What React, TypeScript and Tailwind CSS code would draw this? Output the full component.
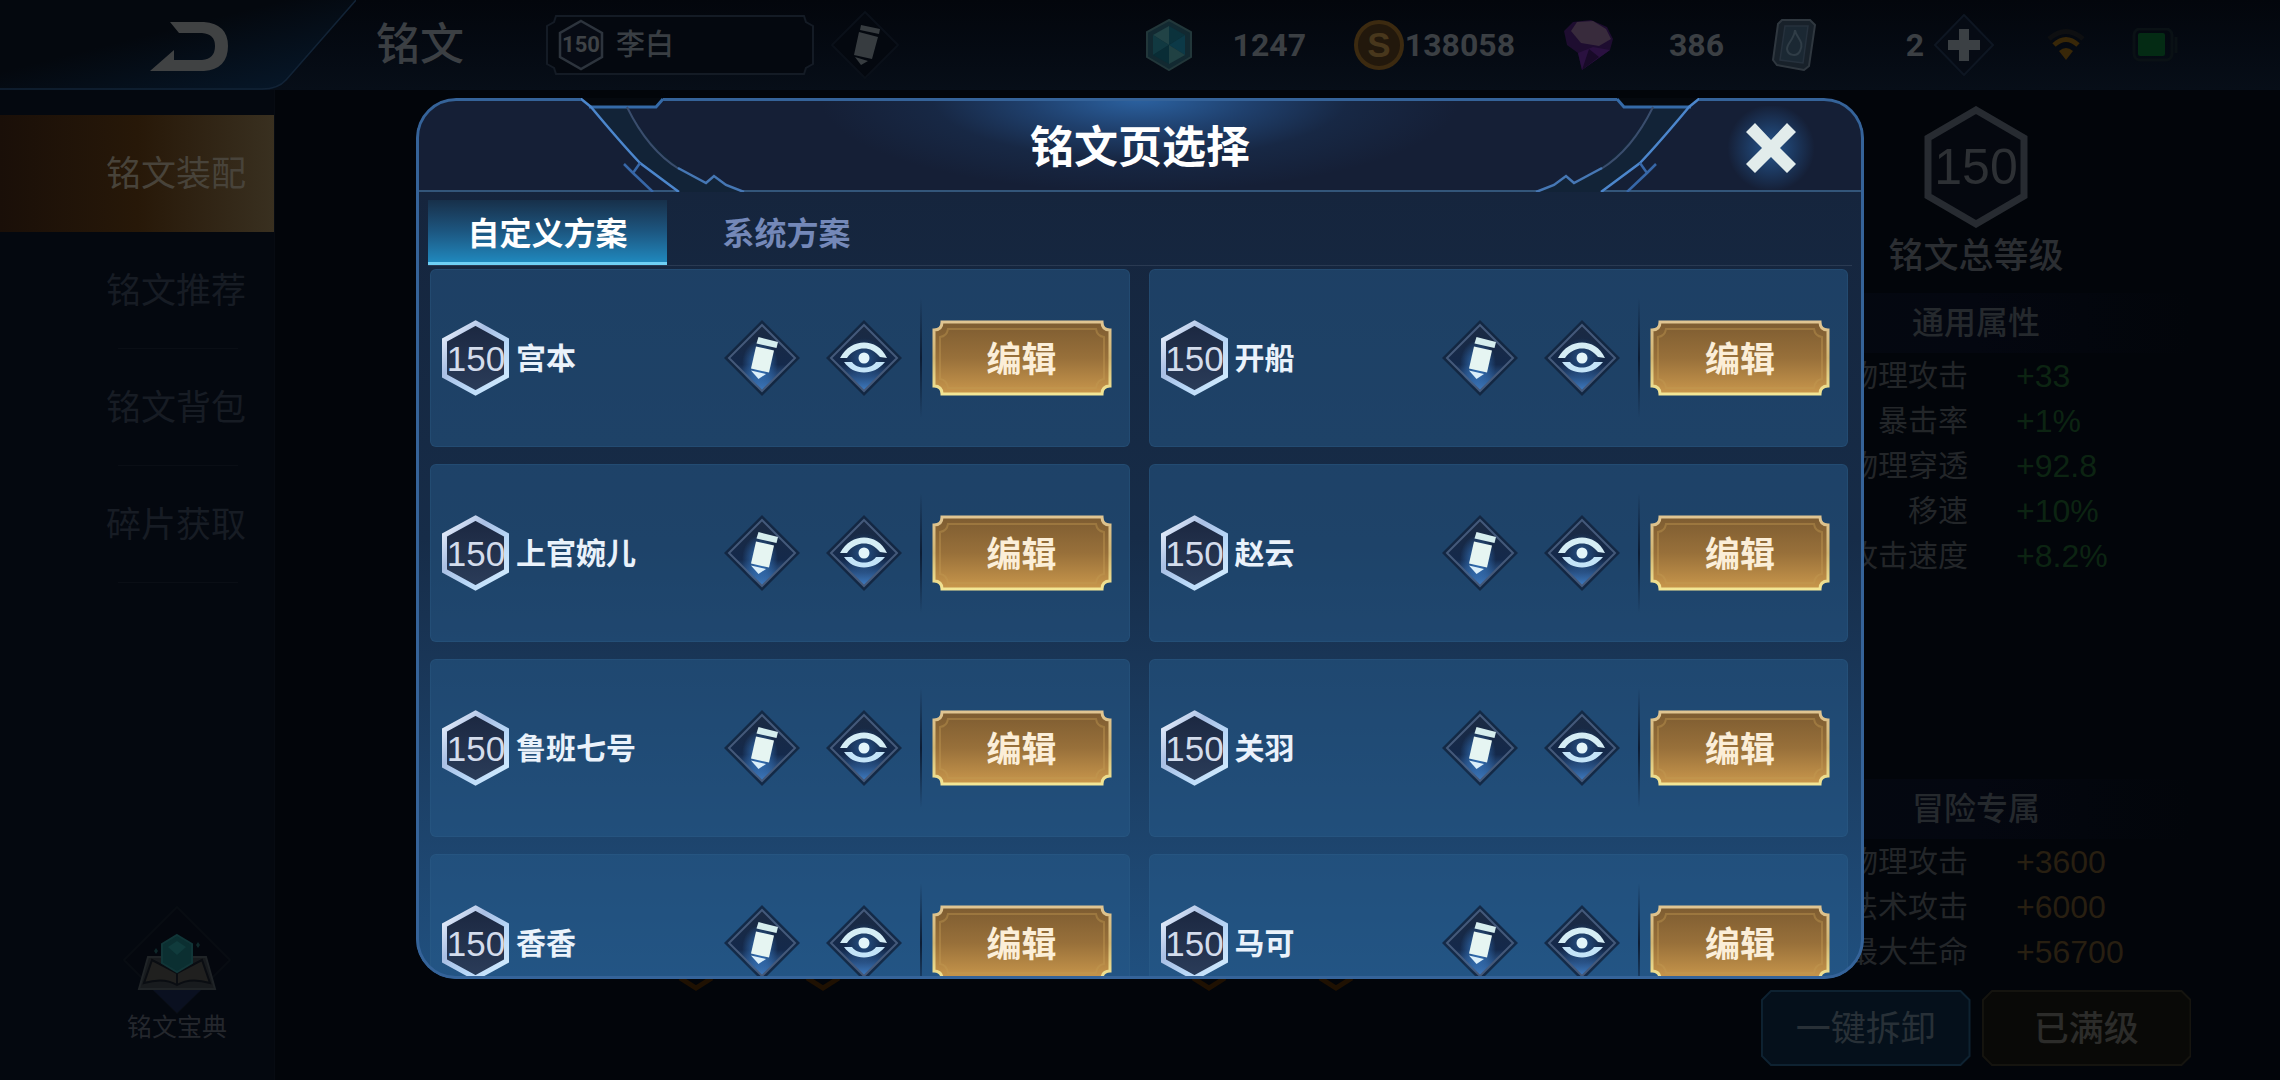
import React, { useState } from 'react';

const pages = ['宫本', '开船', '上官婉儿', '赵云', '鲁班七号', '关羽', '香香', '马可'];

const navItems = ['铭文装配', '铭文推荐', '铭文背包', '碎片获取'];

const commonStats = [
  { label: '物理攻击', value: '+33' },
  { label: '暴击率', value: '+1%' },
  { label: '物理穿透', value: '+92.8' },
  { label: '移速', value: '+10%' },
  { label: '攻击速度', value: '+8.2%' },
];

const adventureStats = [
  { label: '物理攻击', value: '+3600' },
  { label: '法术攻击', value: '+6000' },
  { label: '最大生命', value: '+56700' },
];

// Gradients shared by all icons
const SharedDefs = () => (
  <svg className="absolute h-0 w-0" aria-hidden="true">
    <defs>
      <linearGradient id="hexStroke" x1="0" y1="0" x2="1" y2="1">
        <stop offset="0" stopColor="#f4f8ff" />
        <stop offset="0.35" stopColor="#a9bfe4" />
        <stop offset="0.65" stopColor="#b9d8f8" />
        <stop offset="1" stopColor="#d6efff" />
      </linearGradient>
      <linearGradient id="hexFill" x1="0" y1="0" x2="0" y2="1">
        <stop offset="0" stopColor="#1b2740" />
        <stop offset="1" stopColor="#2b3d5a" />
      </linearGradient>
      <linearGradient id="diamondFill" x1="0" y1="0" x2="0" y2="1">
        <stop offset="0" stopColor="#1b2a42" />
        <stop offset="0.6" stopColor="#14294b" />
        <stop offset="1" stopColor="#3f7dc4" />
      </linearGradient>
      <linearGradient id="goldFill" x1="0" y1="0" x2="0" y2="1">
        <stop offset="0" stopColor="#7d5c31" />
        <stop offset="0.5" stopColor="#98703a" />
        <stop offset="1" stopColor="#c9974c" />
      </linearGradient>
      <linearGradient id="goldStroke" x1="0" y1="0" x2="0" y2="1">
        <stop offset="0" stopColor="#e0c592" />
        <stop offset="0.5" stopColor="#d2b672" />
        <stop offset="1" stopColor="#f3e695" />
      </linearGradient>
      <radialGradient id="iconGlow">
        <stop offset="0" stopColor="#3d8be0" stopOpacity="0.8" />
        <stop offset="1" stopColor="#3d8be0" stopOpacity="0" />
      </radialGradient>
    </defs>
  </svg>
);

const LevelHex = () => (
  <span className="grid h-[76px] w-[68px] shrink-0 place-items-center">
    <svg viewBox="0 0 68 76" className="col-start-1 row-start-1 h-[76px] w-[68px]">
      <path d="M33.500 3 L64.500 20 V56 L33.500 73 L2.500 56 V20 Z" fill="url(#hexFill)" stroke="url(#hexStroke)" strokeWidth="5" />
    </svg>
    <span className="col-start-1 row-start-1 text-[35px] leading-none text-[#d3dcec]">150</span>
  </span>
);

const DiamondBase = () => (
  <>
    <path d="M38 0 L76 38 L38 76 L0 38 Z" fill="#10203a" opacity="0.8" />
    <path d="M38 5 L71 38 L38 71 L5 38 Z" fill="url(#diamondFill)" stroke="#44597a" strokeWidth="2" />
  </>
);

const PencilIcon = () => (
  <svg viewBox="0 0 76 76" className="h-[76px] w-[76px]">
    <DiamondBase />
    <ellipse cx="36" cy="44" rx="18" ry="24" fill="url(#iconGlow)" />
    <path d="M34.500 17 L54 22 L52.500 28 L32.500 23.500 Z" fill="#d5edee" />
    <path d="M32 26.500 L50 30.500 L45 52.500 L27 48.500 Z" fill="#e6f5f2" />
    <path d="M27 50.500 L42 54 L34.500 59 Z" fill="#dbeffa" />
  </svg>
);

const EyeIcon = () => (
  <svg viewBox="0 0 76 76" className="h-[76px] w-[76px]">
    <DiamondBase />
    <circle cx="38" cy="38" r="20" fill="url(#iconGlow)" opacity="0.5" />
    <path d="M14 38 C20 27 29 22.500 38 22.500 C47 22.500 56 27 61 38 L54 37 C49 31 44 28.500 38 28.500 C32 28.500 26 31 21 38 Z" fill="#d5edf5" />
    <path d="M18 42 L26 42 C29 46 33 47.500 38 47.500 C43 47.500 47 46 50 42 L59 42 C53 49 46 52.500 38 52.500 C30 52.500 23 49 18 42 Z" fill="#c4e4f8" />
    <circle cx="38" cy="38" r="5.500" fill="#e3f5fa" />
  </svg>
);

const GoldFrame = () => (
  <svg viewBox="0 0 180 76" preserveAspectRatio="none" className="absolute inset-0 h-full w-full">
    <path
      d="M10 2 H170 Q170 10 178 10 V66 Q170 66 170 74 H10 Q10 66 2 66 V10 Q10 10 10 2 Z"
      fill="url(#goldFill)"
      stroke="url(#goldStroke)"
      strokeWidth="3"
    />
    <path
      d="M16 9 H164 Q165 16 172 17 V59 Q165 60 164 68 H16 Q15 60 8 59 V17 Q15 16 16 9 Z"
      fill="none"
      stroke="#c39a52"
      strokeOpacity="0.4"
      strokeWidth="2"
    />
  </svg>
);

const PageCard: React.FC<{ name: string }> = ({ name }) => (
  <li className="flex h-[178px] items-center rounded-md border border-[#31628c]/30 bg-[#265a8a]/50 pl-[11px] pr-[17px]">
    <LevelHex />
    <span className="ml-1.5 flex-1 whitespace-nowrap pt-0.5 text-[30px] font-bold leading-none text-[#eaf2fb]">{name}</span>
    <button aria-label={`重命名 ${name}`} className="mr-[26px] shrink-0">
      <PencilIcon />
    </button>
    <button aria-label={`预览 ${name}`} className="shrink-0">
      <EyeIcon />
    </button>
    <div className="ml-[18px] mr-[10px] h-[120px] w-0.5 shrink-0 bg-linear-to-b from-transparent via-[#0c1c33] to-transparent" />
    <button className="relative h-[76px] w-[180px] shrink-0 pt-1">
      <GoldFrame />
      <span className="relative text-[35px] font-bold leading-none text-[#fbeed8]">编辑</span>
    </button>
  </li>
);

// Corner strokes of the dialog header; the right one is mirrored
const HeaderCorner: React.FC<{ className?: string }> = ({ className }) => (
  <svg viewBox="0 0 344 94" fill="none" className={`pointer-events-none absolute top-0 h-[94px] w-[344px] ${className}`}>
    <path d="M175 9 L197 37 Q208 52 224 65 L263 94 H328 L310 87 L298 78 L290 85 Q240 60 211 9 Z" fill="#122337" />
    <path d="M163 -1 L174 9 H240 L249 -1 Z" fill="#05090f" />
    <path d="M173 9 H240 L247 1" stroke="#356aa8" strokeWidth="3" />
    <path d="M164 0 L175 9 Q205 45 224 65 L263 94" stroke="#4c86cc" strokeWidth="2.500" />
    <path d="M224 65 L217 75 M208 66 L217 75 L237 94" stroke="#3767a8" strokeWidth="2.500" />
    <path d="M211 9 Q232 52 263 71" stroke="#3a4d6d" strokeWidth="2" />
    <path d="M262 70 L290 85 L298 78 L310 87 L328 94" stroke="#4677b4" strokeWidth="2.500" />
  </svg>
);

const SelectDialog = () => {
  const [tab, setTab] = useState(0);
  const tabs = ['自定义方案', '系统方案'];

  return (
    <div className="absolute inset-0 px-[416px] pb-[101px] pt-[98px]">
      <section
        role="dialog"
        aria-label="铭文页选择"
        className="relative flex h-full flex-col overflow-hidden rounded-[40px] bg-linear-to-b from-[#15233a] via-[#162c48] to-[#20507f]"
      >
        {/* Title bar */}
        <header className="relative grid h-[94px] shrink-0 grid-cols-[1fr_auto_1fr] items-center border-b-2 border-[#33567a] bg-[#151f36] bg-[radial-gradient(ellipse_320px_94px_at_50%_0%,rgba(46,106,174,0.9)_0%,rgba(38,86,146,0.6)_35%,rgba(30,66,112,0.25)_65%,transparent_100%)] pt-2">
          <HeaderCorner className="left-0" />
          <HeaderCorner className="right-0 -scale-x-100" />
          <h2 className="col-start-2 text-[44px] font-bold leading-none text-white">铭文页选择</h2>
          <button
            aria-label="关闭"
            className="relative mr-[47px] flex h-[84px] w-[92px] items-center justify-center justify-self-end bg-[radial-gradient(circle,#28568c_0%,rgba(32,70,118,0.7)_35%,transparent_70%)]"
          >
            <svg viewBox="0 0 52 52" className="h-[52px] w-[52px]">
              <path d="M10 1 L26 18 L42 1 L51 10 L35 26 L51 42 L42 51 L26 35 L10 51 L1 42 L17 26 L1 10 Z" fill="#e2eceb" />
            </svg>
          </button>
        </header>

        {/* Tabs */}
        <div role="tablist" className="mx-3 mt-2 flex h-[66px] shrink-0 border-b border-[#2a3a52]">
          {tabs.map((label, i) => (
            <button
              key={label}
              role="tab"
              aria-selected={tab === i}
              onClick={() => setTab(i)}
              className={`w-[239px] border-b-3 pt-1.5 text-[32px] font-bold leading-none ${
                tab === i
                  ? 'border-[#6fd0f5] bg-linear-to-b from-[#17304a] via-[#1c5680] to-[#1f88bd] text-white'
                  : 'border-transparent text-[#7488b8]'
              }`}
            >
              {label}
            </button>
          ))}
        </div>

        {/* Page list */}
        <div className="mb-[3px] min-h-0 flex-1 overflow-hidden pl-3.5 pr-4 pt-[3px]">
          <ul className="grid grid-cols-2 gap-x-[19px] gap-y-[17px]">
            {pages.map((name) => (
              <PageCard key={name} name={name} />
            ))}
          </ul>
        </div>
      </section>
      {/* Outline, left open over the two notches of the title bar */}
      <div className="pointer-events-none absolute inset-x-[416px] bottom-[101px] top-[98px] rounded-[40px] border-3 border-[#356399] [mask-image:linear-gradient(to_right,#000_165px,transparent_165px,transparent_247px,#000_247px,#000_calc(100%-247px),transparent_calc(100%-247px),transparent_calc(100%-165px),#000_calc(100%-165px)),linear-gradient(to_bottom,transparent_30px,#000_30px)]" />
    </div>
  );
};

const Resource: React.FC<{ value: string; children: React.ReactNode }> = ({ value, children }) => (
  <div className="flex w-[161px] items-center justify-between">
    {children}
    <span className="font-[Roboto] text-[32px] font-bold leading-none text-[#3b3f43]">{value}</span>
  </div>
);

const TopBar = () => (
  <header className="flex h-[90px] shrink-0 items-center bg-linear-to-b from-[#03060c] to-[#070e18]">
    <button aria-label="返回" className="h-[90px] w-[356px] shrink-0">
      <svg viewBox="0 0 356 90" className="h-[90px] w-[356px]">
        <defs>
          <linearGradient id="backFill" x1="0" y1="0" x2="1" y2="1">
            <stop offset="0.4" stopColor="#04080e" />
            <stop offset="1" stopColor="#071a2e" />
          </linearGradient>
        </defs>
        <path d="M0 0 H356 L286 80 Q278 90 262 90 H0 Z" fill="url(#backFill)" />
        <path d="M356 0 L286 80 Q278 89 262 89 H0" fill="none" stroke="#122336" strokeWidth="1.500" />
        <path d="M170 22 H204 Q228 24 228 46 Q228 69 204 71 H150 L174 50 V60 H202 Q215 59 215 46 Q215 34 202 33 H179 Z" fill="#404243" />
      </svg>
    </button>
    <h1 className="ml-5 w-[170px] whitespace-nowrap text-[44px] font-medium leading-none text-[#3b3f43]">铭文</h1>
    <button className="relative flex h-[60px] w-[268px] shrink-0 items-center pl-3">
      <svg viewBox="0 0 268 60" className="absolute inset-0 h-full w-full" fill="none">
        <path d="M10 1 H258 L260 7 L267 11 V49 L260 53 L258 59 H10 L8 53 L1 49 V11 L8 7 Z" fill="#04080f" stroke="#141b25" strokeWidth="2" />
      </svg>
      <span className="relative grid place-items-center">
        <svg viewBox="0 0 46 52" className="col-start-1 row-start-1 h-[52px] w-[46px]">
          <path d="M23 2 L44 14 V38 L23 50 L2 38 V14 Z" fill="#070b14" stroke="#2d343d" strokeWidth="2.500" />
        </svg>
        <span className="col-start-1 row-start-1 font-[Roboto] text-[22px] font-bold leading-none text-[#3e4246]">150</span>
      </span>
      <span className="relative ml-3 text-[29px] font-medium leading-none text-[#393e43]">李白</span>
    </button>
    <button aria-label="重命名" className="ml-4 shrink-0">
      <svg viewBox="0 0 70 70" className="h-[70px] w-[70px]">
        <path d="M35 2 L68 35 L35 68 L2 35 Z" fill="#04080f" stroke="#0a1019" strokeWidth="2" />
        <path d="M31 15 L50 19 L49 24 L30 20 Z M29 22 L48 27 L42 49 L24 45 Z M25 47 L38 51 L31 55 Z" fill="#373c40" />
      </svg>
    </button>

    {/* Currencies */}
    <div className="ml-auto mr-[100px] flex items-center gap-12">
      <Resource value="1247">
        <svg viewBox="0 0 50 52" className="h-[52px] w-[50px]">
          <path d="M24 1 L46 13 V38 L24 51 L2 38 V13 Z" fill="#122931" stroke="#22373a" strokeWidth="2" />
          <path d="M24 7 L40 16 L24 26 Z" fill="#0b323c" />
          <path d="M24 7 L8 16 L24 26 Z" fill="#214346" />
          <path d="M40 16 V36 L24 26 Z" fill="#0c3947" />
          <path d="M8 16 V36 L24 26 Z" fill="#113941" />
          <path d="M8 36 L24 45 L24 26 Z" fill="#092d36" />
          <path d="M40 36 L24 45 L24 26 Z" fill="#204143" />
        </svg>
      </Resource>
      <Resource value="138058">
        <svg viewBox="0 0 50 52" className="h-[52px] w-[50px]">
          <circle cx="25" cy="26" r="23" fill="#22180c" stroke="#3c2a10" strokeWidth="4" />
          <text x="25" y="38" textAnchor="middle" fontSize="35" fontWeight="bold" fontFamily="Liberation Sans" fill="#48371c">S</text>
        </svg>
      </Resource>
      <Resource value="386">
        <svg viewBox="0 0 50 52" className="h-[52px] w-[50px]">
          <path d="M1 12 L10 3 L28 1 L44 8 L50 20 L47 31 L19 51 L15 34 L4 26 Z" fill="#1e0d30" />
          <path d="M8 12 L14 3 L30 2 L43 10 L48 20 L36 27 L18 24 Z" fill="#382b3c" />
          <path d="M15 34 L30 28 L47 31 L19 51 Z" fill="#2a1140" />
          <path d="M19 51 L26 30 L36 38 Z" fill="#180a28" />
        </svg>
      </Resource>
      <div className="flex items-center gap-2.5">
        <div className="flex w-[152px] items-center justify-between">
          <svg viewBox="0 0 44 52" className="h-[52px] w-[44px]">
            <path d="M10 1 H38 L43 6 L37 47 L32 51 L5 46 L1 41 L6 5 Z" fill="#18212a" stroke="#2f373f" strokeWidth="2" />
            <path d="M13 7 H36 L31 44 L8 41 Z" fill="#1b2833" stroke="#26313d" strokeWidth="1.500" />
            <path d="M23 11 C24 19 33 22 28 32 C25 38 16 37 15 30 C15 24 22 21 23 11 Z" fill="none" stroke="#303d47" strokeWidth="2" />
          </svg>
          <span className="font-[Roboto] text-[32px] font-bold leading-none text-[#3b3f43]">2</span>
        </div>
        <button aria-label="添加">
          <svg viewBox="0 0 60 62" className="h-[62px] w-[60px]">
            <path d="M30 1 L59 31 L30 61 L1 31 Z" fill="#060b14" stroke="#0e1622" strokeWidth="2" />
            <path d="M25 15 H35 V26 H46 V36 H35 V47 H25 V36 H14 V26 H25 Z" fill="#3b4044" />
          </svg>
        </button>
      </div>
      <div className="flex items-center gap-[42px]">
        <svg viewBox="0 0 48 34" className="h-[34px] w-[48px]" fill="none">
          <path d="M7 11 Q24 -4 41 11" stroke="#0e0f11" strokeWidth="5" />
          <path d="M12 17 Q24 6 36 17" stroke="#382708" strokeWidth="5" />
          <path d="M17 23 Q24 17 31 23 L24 32 Z" fill="#382708" />
        </svg>
        <svg viewBox="0 0 48 34" className="h-[34px] w-[48px]">
          <rect x="2" y="1" width="38" height="31" rx="6" fill="none" stroke="#0a1115" strokeWidth="3" />
          <rect x="6" y="5" width="27" height="23" rx="2" fill="#042b14" />
          <path d="M44 9 V25" stroke="#0a1115" strokeWidth="3" />
        </svg>
      </div>
    </div>
  </header>
);

const SideNav = () => (
  <aside className="flex w-[275px] shrink-0 flex-col border-r border-[#070b12] bg-[#04080f] pb-10 pt-[25px]">
    <nav>
      {navItems.map((label, i) => (
        <a
          key={label}
          href="#"
          className={`flex h-[117px] flex-col items-end justify-between pr-7 text-[35px] leading-none ${
            i === 0
              ? 'bg-linear-to-r from-[#1a0f08] via-[#271808] to-[#393020] text-[#48433a]'
              : 'text-[#171c24]'
          }`}
        >
          <span />
          <span>{label}</span>
          <span className={`mr-2 h-px w-[120px] ${i === 0 ? '' : 'bg-[#0a0e15]'}`} />
        </a>
      ))}
    </nav>
    <a href="#" className="ml-[122px] mt-auto flex w-[110px] flex-col items-center text-[25px] leading-none text-[#24272d]">
      <svg viewBox="0 0 110 110" className="h-[110px] w-[110px]">
        <path d="M55 2 L108 55 L55 108 L2 55 Z" fill="#04070e" stroke="#080c12" strokeWidth="2" />
        <path d="M30 84 H80 L55 108 Z" fill="#0a1020" />
        <path d="M26 52 H84 L93 84 H17 Z" fill="#181b1e" stroke="#202427" strokeWidth="2" />
        <path d="M30 55 L22 78 Q42 72 55 80 Q68 72 88 78 L80 55 L55 68 Z" fill="#20201f" stroke="#0a0d12" strokeWidth="2" />
        <path d="M55 68 V80" stroke="#0a0d12" strokeWidth="2" />
        <path d="M55 30 L70 39 V58 L55 67 L40 58 V39 Z" fill="#0b2f31" stroke="#113638" strokeWidth="2" />
        <path d="M55 36 L64 42 L55 50 L46 42 Z" fill="#103b3c" />
        <path d="M34 43 L36 46 L34 49 L32 46 Z M76 37 L78 40 L76 43 L74 40 Z" fill="#0f282a" />
      </svg>
      <span>铭文宝典</span>
    </a>
  </aside>
);

const StatBlock: React.FC<{ title: string; stats: { label: string; value: string }[]; valueClass: string }> = ({
  title,
  stats,
  valueClass,
}) => (
  <div>
    <h3 className="flex h-[60px] items-center justify-center bg-linear-to-r from-[#040810] via-[#040710] to-transparent text-[32px] font-medium leading-none text-[#25292d]">
      {title}
    </h3>
    <dl>
      {stats.map(({ label, value }) => (
        <div key={label} className="grid h-[45px] grid-cols-[207px_1fr] items-center gap-12 leading-none">
          <dt className="text-right text-[30px] text-[#232629]">{label}</dt>
          <dd className={`text-[32px] ${valueClass}`}>{value}</dd>
        </div>
      ))}
    </dl>
  </div>
);

const StatsPanel = () => (
  <aside className="mr-[89px] flex w-[430px] shrink-0 flex-col pb-3.5 pt-4">
    <div className="flex h-[122px] items-center justify-center">
      <span className="grid place-items-center">
        <svg viewBox="0 0 106 122" className="col-start-1 row-start-1 h-[122px] w-[106px]">
          <path d="M53 4 L101 32 V90 L53 118 L5 90 V32 Z" fill="#05080f" stroke="#272b31" strokeWidth="7" />
        </svg>
        <span className="col-start-1 row-start-1 text-[50px] leading-none text-[#2d3034]">150</span>
      </span>
    </div>
    <p className="mb-5 mt-2.5 text-center text-[35px] font-medium leading-none text-[#2b2e32]">铭文总等级</p>
    <StatBlock title="通用属性" stats={commonStats} valueClass="text-[#0c2412]" />
    <div className="mt-auto">
      <StatBlock title="冒险专属" stats={adventureStats} valueClass="text-[#281f11]" />
      <div className="mt-4 grid grid-cols-2 gap-[11px]">
        <button className="relative h-[76px] text-[35px] leading-none text-[#283037]">
          <svg viewBox="0 0 210 76" preserveAspectRatio="none" className="absolute inset-0 h-full w-full">
            <path d="M10 1 H200 L209 10 V66 L200 75 H10 L1 66 V10 Z" fill="#05101b" stroke="#0e2231" strokeWidth="2" />
          </svg>
          <span className="relative">一键拆卸</span>
        </button>
        <button className="relative h-[76px] text-[35px] font-medium leading-none text-[#2c2c2a]">
          <svg viewBox="0 0 210 76" preserveAspectRatio="none" className="absolute inset-0 h-full w-full">
            <path d="M10 1 H200 L209 10 V66 L200 75 H10 L1 66 V10 Z" fill="#090907" stroke="#15140f" strokeWidth="2" />
          </svg>
          <span className="relative">已满级</span>
        </button>
      </div>
    </div>
  </aside>
);

// Tips of the rune slots that stick out below the dialog
const RuneTips = () => (
  <div className="flex flex-1 items-end justify-center pb-[88px]">
    <svg viewBox="0 0 680 14" className="mr-[5px] h-[14px] w-[680px]" fill="none">
      {[20, 147, 533, 660].map((x) => (
        <path key={x} d={`M${x - 16} 0 L${x} 10 L${x + 16} 0`} stroke="#1f1102" strokeWidth="5" />
      ))}
    </svg>
  </div>
);

const App: React.FC = () => (
  <div className="relative flex h-screen flex-col overflow-hidden bg-[#02050a] font-['Liberation_Sans','Noto_Sans_CJK_SC',sans-serif]">
    <SharedDefs />
    <TopBar />
    <main className="flex min-h-0 flex-1">
      <SideNav />
      <RuneTips />
      <StatsPanel />
    </main>
    <SelectDialog />
  </div>
);

export default App;
